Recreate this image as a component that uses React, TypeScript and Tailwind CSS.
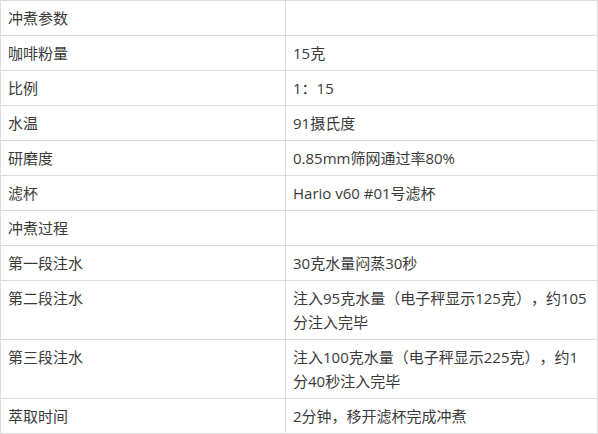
const rows: [string, string][] = [
  ['冲煮参数', ''],
  ['咖啡粉量', '15克'],
  ['比例', '1：15'],
  ['水温', '91摄氏度'],
  ['研磨度', '0.85mm筛网通过率80%'],
  ['滤杯', 'Hario v60 #01号滤杯'],
  ['冲煮过程', ''],
  ['第一段注水', '30克水量闷蒸30秒'],
  ['第二段注水', '注入95克水量（电子秤显示125克），约105分注入完毕'],
  ['第三段注水', '注入100克水量（电子秤显示225克），约1分40秒注入完毕'],
  ['萃取时间', '2分钟，移开滤杯完成冲煮'],
];

export default function App() {
  return (
    <div className="w-[598px] h-[434px] bg-white">
      <table
        className="w-full border-collapse table-fixed text-[15px] leading-6 text-[#3a3a3a] [text-spacing-trim:space-all]"
        style={{ fontFamily: '"Open Sans", "Noto Sans CJK SC", sans-serif' }}
      >
        <colgroup>
          <col className="w-[285px]" />
          <col />
        </colgroup>
        <tbody>
          {rows.map(([k, v]) => (
            <tr key={k}>
              <td className="border border-[#dcdcdc] px-[7px] py-[5px] align-top">{k}</td>
              <td className="border border-[#dcdcdc] px-[7px] py-[5px] align-top break-all">{v}</td>
            </tr>
          ))}
        </tbody>
      </table>
    </div>
  );
}
